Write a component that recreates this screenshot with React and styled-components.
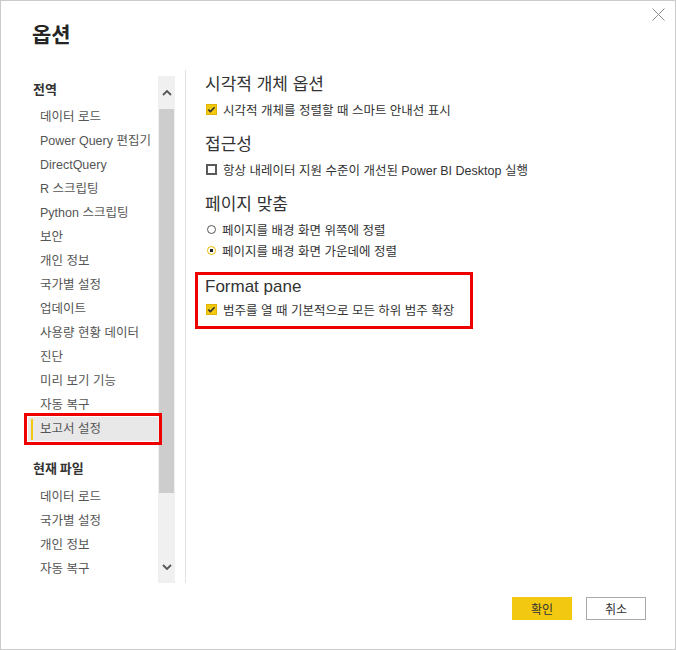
import React from 'react'
import styled, { createGlobalStyle } from 'styled-components'

const GlobalStyle = createGlobalStyle`
  html, body {
    margin: 0;
    padding: 0;
    background: #fff;
  }
  body {
    font-family: "Liberation Sans", "Noto Sans CJK KR", sans-serif;
  }
`

const Dialog = styled.div`
  width: 676px;
  height: 650px;
  box-sizing: border-box;
  border: 1px solid #cbcbcb;
  background: #fff;
  display: flex;
  flex-direction: column;
  color: #333;
`

const Header = styled.div`
  height: 69px;
  display: flex;
  justify-content: space-between;
  align-items: flex-start;
  padding: 0 10px 0 31px;
`

const Title = styled.h1`
  margin: 0;
  padding-top: 19px;
  font-size: 21px;
  line-height: 26px;
  font-weight: 700;
  color: #252525;
  font-family: "Noto Sans CJK KR", sans-serif;
`

const CloseButton = styled.button`
  margin-top: 7px;
  width: 13px;
  height: 13px;
  padding: 0;
  border: none;
  background: none;
  display: flex;
  cursor: pointer;
`

const Main = styled.div`
  height: 513px;
  display: flex;
`

const Sidebar = styled.div`
  width: 184px;
  flex: none;
  display: flex;
  overflow: hidden;
`

const NavList = styled.nav`
  flex: 1;
  padding-left: 24px;
`

const NavHeading = styled.div`
  padding-left: 8px;
  margin: ${(p) => (p.$first ? '7px 0 4px' : '15px 0 5px')};
  font-size: 13px;
  line-height: 24px;
  font-weight: 700;
  color: #333;
  font-family: "Noto Sans CJK KR", sans-serif;
`

const NavItem = styled.div`
  margin-left: 3px;
  padding-left: 12px;
  height: 24px;
  font-size: 12.5px;
  line-height: 24px;
  color: #555;
  white-space: nowrap;
  cursor: pointer;
  ${(p) =>
    p.$active &&
    `
    background: linear-gradient(#f2c811, #f2c811) 3px 2px / 2px 21px no-repeat, #e8e8e8;
    outline: 3px solid #ee0000;
    outline-offset: 1px;
    position: relative;
    z-index: 1;
  `}
`

const Scrollbar = styled.div`
  width: 17px;
  margin: 6px 10px 0 0;
  background: #f0f0f0;
  display: flex;
  flex-direction: column;
  align-items: center;
`

const ScrollArrow = styled.div`
  height: 33px;
  display: flex;
  align-items: center;
  justify-content: center;
  flex: none;
`

const ScrollThumb = styled.div`
  width: 15px;
  height: 384px;
  background: #cdcdcd;
  flex: none;
`

const ScrollSpace = styled.div`
  flex: 1;
`

const Content = styled.div`
  flex: 1;
  border-left: 1px solid #e3e3e3;
  padding-left: 19px;
`

const Section = styled.section`
  margin-top: ${(p) => (p.$first ? '1px' : '11px')};
  ${(p) =>
    p.$marked &&
    `
    margin-left: -10px;
    width: 278px;
    box-sizing: border-box;
    border: 3px solid #ee0000;
    padding: 0 0 6px 7px;
  `}
`

const SectionTitle = styled.h2`
  margin: 0;
  font-size: 17px;
  line-height: ${(p) => (p.$tight ? '24px' : '28px')};
  font-weight: 400;
  color: #333;
`

const OptionRow = styled.label`
  display: flex;
  align-items: center;
  gap: 6px;
  height: 21px;
  font-size: 12.5px;
  color: #333;
  white-space: nowrap;
  cursor: pointer;
`

const Box = styled.span`
  width: 11px;
  height: 11px;
  margin-left: 1px;
  box-sizing: border-box;
  flex: none;
  display: flex;
  align-items: center;
  justify-content: center;
  background: ${(p) => (p.$checked ? '#f2c811' : '#fff')};
  border: ${(p) => (p.$checked ? '1px solid #e0b400' : '2px solid #5a5a5a')};
`

const Radio = styled.span`
  width: 9px;
  height: 9px;
  margin-left: 2px;
  box-sizing: border-box;
  flex: none;
  border-radius: 50%;
  border: 1.5px solid ${(p) => (p.$checked ? '#e8b900' : '#555')};
  background: ${(p) =>
    p.$checked ? 'radial-gradient(circle, #222 0 1.6px, #fff 2px)' : '#fff'};
`

const Footer = styled.div`
  flex: 1;
  display: flex;
  justify-content: flex-end;
  align-items: flex-start;
  gap: 14px;
  padding: 14px 29px 0 0;
`

const Button = styled.button`
  width: 60px;
  height: 23px;
  box-sizing: border-box;
  font-family: "Noto Sans CJK KR", sans-serif;
  font-size: 12px;
  color: #333;
  cursor: pointer;
  padding: 0;
  background: ${(p) => (p.$primary ? '#f2c811' : '#fff')};
  border: ${(p) => (p.$primary ? '1px solid #f2c811' : '1px solid #a9a9a9')};
`

const Check = () => (
  <svg width="9" height="9" viewBox="0 0 9 9">
    <polyline points="1.3,4.6 3.4,6.6 7.6,2.2" fill="none" stroke="#333" strokeWidth="1.6" />
  </svg>
)

const Checkbox = ({ checked, children }) => (
  <OptionRow>
    <Box $checked={checked}>{checked && <Check />}</Box>
    {children}
  </OptionRow>
)

const RadioOption = ({ checked, children }) => (
  <OptionRow>
    <Radio $checked={checked} />
    {children}
  </OptionRow>
)

const Chevron = ({ up }) => (
  <svg width="10" height="6" viewBox="0 0 10 6">
    <polyline
      points={up ? '1,5 5,1 9,5' : '1,1 5,5 9,1'}
      fill="none"
      stroke="#555"
      strokeWidth="1.8"
    />
  </svg>
)

const globalItems = [
  '데이터 로드',
  'Power Query 편집기',
  'DirectQuery',
  'R 스크립팅',
  'Python 스크립팅',
  '보안',
  '개인 정보',
  '국가별 설정',
  '업데이트',
  '사용량 현황 데이터',
  '진단',
  '미리 보기 기능',
  '자동 복구',
  '보고서 설정',
]

const fileItems = ['데이터 로드', '국가별 설정', '개인 정보', '자동 복구']

export default function App() {
  return (
    <>
      <GlobalStyle />
      <Dialog>
        <Header>
          <Title>옵션</Title>
          <CloseButton aria-label="닫기">
            <svg width="13" height="13" viewBox="0 0 13 13">
              <path d="M0.5 0.5 L12.5 12.5 M12.5 0.5 L0.5 12.5" stroke="#8a8a8a" strokeWidth="1" />
            </svg>
          </CloseButton>
        </Header>
        <Main>
          <Sidebar>
            <NavList>
              <NavHeading $first>전역</NavHeading>
              {globalItems.map((item) => (
                <NavItem key={item} $active={item === '보고서 설정'}>
                  {item}
                </NavItem>
              ))}
              <NavHeading>현재 파일</NavHeading>
              {fileItems.map((item) => (
                <NavItem key={item}>{item}</NavItem>
              ))}
            </NavList>
            <Scrollbar>
              <ScrollArrow>
                <Chevron up />
              </ScrollArrow>
              <ScrollThumb />
              <ScrollSpace />
              <ScrollArrow>
                <Chevron />
              </ScrollArrow>
            </Scrollbar>
          </Sidebar>
          <Content>
            <Section $first>
              <SectionTitle>시각적 개체 옵션</SectionTitle>
              <Checkbox checked>시각적 개체를 정렬할 때 스마트 안내선 표시</Checkbox>
            </Section>
            <Section>
              <SectionTitle>접근성</SectionTitle>
              <Checkbox>항상 내레이터 지원 수준이 개선된 Power BI Desktop 실행</Checkbox>
            </Section>
            <Section>
              <SectionTitle>페이지 맞춤</SectionTitle>
              <RadioOption>페이지를 배경 화면 위쪽에 정렬</RadioOption>
              <RadioOption checked>페이지를 배경 화면 가운데에 정렬</RadioOption>
            </Section>
            <Section $marked>
              <SectionTitle $tight>Format pane</SectionTitle>
              <Checkbox checked>범주를 열 때 기본적으로 모든 하위 범주 확장</Checkbox>
            </Section>
          </Content>
        </Main>
        <Footer>
          <Button $primary>확인</Button>
          <Button>취소</Button>
        </Footer>
      </Dialog>
    </>
  )
}
